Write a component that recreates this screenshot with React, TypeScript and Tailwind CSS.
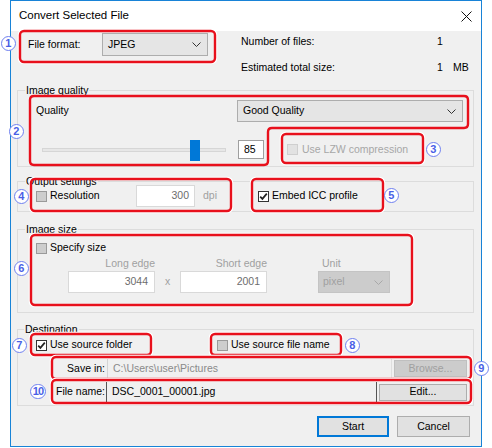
import React from "react";

type BoxKind = "checked" | "gray" | "light";

function CheckBox({ kind }: { kind: BoxKind }) {
  if (kind === "checked") {
    return (
      <span className="w-[11px] h-[11px] border border-[#333333] bg-white flex items-center justify-center shrink-0">
        <svg width="9" height="9" viewBox="0 0 9 9">
          <path d="M1.2 4.6 L3.4 6.9 L7.8 1.6" fill="none" stroke="#222" strokeWidth="1.7" />
        </svg>
      </span>
    );
  }
  if (kind === "gray") {
    return <span className="w-[11px] h-[11px] border border-[#9a9a9a] bg-[#cdcdcd] shrink-0" />;
  }
  return <span className="w-[11px] h-[11px] border border-[#cfcfcf] bg-[#e2e2e2] shrink-0" />;
}

function Chevron({ color = "#333" }: { color?: string }) {
  return (
    <svg width="9" height="5" viewBox="0 0 9 5" className="shrink-0">
      <path d="M0.5 0.5 L4.5 4.5 L8.5 0.5" fill="none" stroke={color} strokeWidth="1" />
    </svg>
  );
}

function Select({ value, className }: { value: string; className: string }) {
  return (
    <div
      className={`flex items-center justify-between border border-[#adadad] bg-[#e5e5e5] pl-[5px] pr-[6px] ${className}`}
    >
      <span>{value}</span>
      <Chevron />
    </div>
  );
}

// rounded outline through a list of corner points
function roundedPath(pts: [number, number][], r: number) {
  const n = pts.length;
  let d = "";
  for (let i = 0; i < n; i++) {
    const [px, py] = pts[(i - 1 + n) % n];
    const [cx, cy] = pts[i];
    const [nx, ny] = pts[(i + 1) % n];
    const l1 = Math.hypot(cx - px, cy - py);
    const l2 = Math.hypot(nx - cx, ny - cy);
    const ax = cx + ((px - cx) / l1) * r;
    const ay = cy + ((py - cy) / l1) * r;
    const bx = cx + ((nx - cx) / l2) * r;
    const by = cy + ((ny - cy) / l2) * r;
    d += `${i === 0 ? "M" : "L"}${ax} ${ay} Q${cx} ${cy} ${bx} ${by} `;
  }
  return d + "Z";
}

const rects: [number, number, number, number][] = [
  [20, 31, 215, 62],
  [282, 134, 423, 163],
  [31, 179, 231, 211],
  [252, 179, 383, 211],
  [31, 235, 412, 305],
  [31, 334, 151, 355],
  [211, 334, 341, 355],
  [52, 357, 471, 379],
  [52, 380, 471, 403],
];

const qualityOutline = roundedPath(
  [
    [30, 96],
    [468, 96],
    [468, 128],
    [268, 128],
    [268, 165],
    [30, 165],
  ],
  4
);

const markers: { n: string; x: number; y: number; w?: number }[] = [
  { n: "1", x: 8, y: 43 },
  { n: "2", x: 16, y: 131 },
  { n: "3", x: 433, y: 149 },
  { n: "4", x: 21, y: 196 },
  { n: "5", x: 391, y: 195 },
  { n: "6", x: 21, y: 268 },
  { n: "7", x: 19, y: 345 },
  { n: "8", x: 352, y: 345 },
  { n: "9", x: 481, y: 368 },
  { n: "10", x: 38, y: 391, w: 16 },
];

export default function App() {
  return (
    <div className="relative w-[492px] h-[448px] bg-white overflow-hidden font-['Liberation_Sans',Arial,sans-serif] text-[10.5px] text-black">
      <div className="ml-[10px] w-[472px] h-[447px] border border-[#1883d7] bg-[#f0f0f0] flex flex-col">
        {/* title bar */}
        <div className="h-[30px] shrink-0 bg-white flex items-center pl-[8px] pr-[9px]">
          <span className="flex-1 text-[11.5px]">Convert Selected File</span>
          <svg width="11" height="11" viewBox="0 0 11 11">
            <path d="M0.5 0.5 L10.5 10.5 M10.5 0.5 L0.5 10.5" stroke="#111" strokeWidth="1" />
          </svg>
        </div>

        <div className="pl-[6px] pr-[7px] flex flex-col">
          {/* file format + summary */}
          <div className="h-[53px] flex items-start">
            <div className="mt-[2px] pl-[11px] h-[23px] flex items-center">
              <span className="w-[74px]">File format:</span>
              <Select value="JPEG" className="w-[106px] h-[23px]" />
            </div>
            <div className="ml-[33px] pt-[3px] flex flex-col gap-[10px]">
              <div className="h-[16px] flex items-center">
                <span className="w-[196px]">Number of files:</span>
                <span className="w-[16px]">1</span>
              </div>
              <div className="h-[16px] flex items-center">
                <span className="w-[196px]">Estimated total size:</span>
                <span className="w-[16px]">1</span>
                <span>MB</span>
              </div>
            </div>
          </div>

          {/* image quality */}
          <fieldset className="border border-[#dcdcdc] pb-[6px]">
            <legend className="ml-[7px] px-[1px] leading-[12px]">Image quality</legend>
            <div className="mt-[4px] h-[22px] pl-[18px] flex items-center">
              <span className="w-[201px]">Quality</span>
              <Select value="Good Quality" className="w-[226px] h-[22px]" />
            </div>
            <div className="mt-[17px] h-[21px] pl-[24px] flex items-center">
              <div className="relative w-[184px] h-[4px] bg-[#e7e7e7] border border-[#d6d6d6]">
                <div className="absolute left-[147px] top-[-9px] w-[10px] h-[21px] bg-[#0078d7]" />
              </div>
              <div className="ml-[12px] w-[26px] h-[19px] bg-white border border-[#9f9f9f] flex items-center pl-[5px]">
                85
              </div>
              <div className="ml-[23px] flex items-center gap-[4px]">
                <CheckBox kind="light" />
                <span className="text-[#a7a7a7]">Use LZW compression</span>
              </div>
            </div>
          </fieldset>

          {/* output settings */}
          <fieldset className="mt-[8px] border border-[#dcdcdc] pb-[4px]">
            <legend className="ml-[7px] px-[1px] leading-[12px]">Output settings</legend>
            <div className="-mt-[2px] h-[22px] pl-[18px] flex items-center">
              <div className="w-[100px] flex items-center gap-[3px]">
                <CheckBox kind="gray" />
                <span>Resolution</span>
              </div>
              <div className="w-[122px] flex items-center">
                <div className="w-[59px] h-[22px] bg-white border border-[#d9d9d9] flex items-center justify-end pr-[5px] text-[#6d6d6d]">
                  300
                </div>
                <span className="ml-[8px] text-[#a0a0a0]">dpi</span>
              </div>
              <div className="flex items-center gap-[3px]">
                <CheckBox kind="checked" />
                <span>Embed ICC profile</span>
              </div>
            </div>
          </fieldset>

          {/* image size */}
          <fieldset className="mt-[11px] border border-[#dcdcdc] pb-[19px]">
            <legend className="ml-[7px] px-[1px] leading-[12px]">Image size</legend>
            <div className="mt-[6px] h-[14px] pl-[18px] flex items-center gap-[3px]">
              <CheckBox kind="gray" />
              <span>Specify size</span>
            </div>
            <div className="mt-[2px] h-[14px] pl-[50px] flex items-center text-[#a0a0a0]">
              <span className="w-[87px] text-right">Long edge</span>
              <span className="w-[25px]" />
              <span className="w-[87px] text-right">Short edge</span>
              <span className="ml-[51px] w-[72px] pl-[4px]">Unit</span>
            </div>
            <div className="h-[22px] pl-[50px] flex items-center">
              <div className="w-[87px] h-[22px] bg-white border border-[#d9d9d9] flex items-center justify-end pr-[6px] text-[#6d6d6d]">
                3044
              </div>
              <span className="w-[25px] text-center text-[#a0a0a0]">x</span>
              <div className="w-[87px] h-[22px] bg-white border border-[#d9d9d9] flex items-center justify-end pr-[6px] text-[#6d6d6d]">
                2001
              </div>
              <div className="ml-[51px] w-[72px] h-[22px] bg-[#cccccc] border border-[#c4c4c4] flex items-center justify-between pl-[4px] pr-[6px] text-[#a0a0a0]">
                <span>pixel</span>
                <Chevron color="#a8a8a8" />
              </div>
            </div>
          </fieldset>

          {/* destination */}
          <fieldset className="mt-[10px] border border-[#dcdcdc] pb-[2px]">
            <legend className="ml-[6px] px-[1px] leading-[12px]">Destination</legend>
            <div className="mt-[3px] h-[14px] pl-[18px] flex items-center">
              <div className="w-[181px] flex items-center gap-[3px]">
                <CheckBox kind="checked" />
                <span>Use source folder</span>
              </div>
              <div className="flex items-center gap-[3px]">
                <CheckBox kind="gray" />
                <span>Use source file name</span>
              </div>
            </div>
            <div className="mt-[6px] h-[21px] pl-[34px] pr-[6px] flex items-center">
              <span className="w-[53px] text-right">Save in:</span>
              <span className="ml-[2px] w-px h-[20px] bg-[#d4d4d4]" />
              <span className="flex-1 pl-[5px] text-[#8a8a8a]">C:\Users\user\Pictures</span>
              <span className="w-px h-[20px] bg-[#dedede]" />
              <div className="ml-[2px] w-[73px] h-[17px] bg-[#cccccc] border border-[#bfbfbf] flex items-center justify-center text-[#a0a0a0]">
                Browse...
              </div>
            </div>
            <div className="mt-[2px] h-[22px] pl-[34px] pr-[6px] flex items-center">
              <span className="w-[53px] text-right">File name:</span>
              <span className="ml-[1px] w-px h-[20px] bg-[#555555]" />
              <span className="flex-1 pl-[5px]">DSC_0001_00001.jpg</span>
              <span className="w-px h-[20px] bg-[#555555]" />
              <div className="ml-[2px] w-[88px] h-[17px] bg-[#e1e1e1] border border-[#adadad] flex items-center justify-center">
                Edit...
              </div>
            </div>
          </fieldset>

          {/* dialog buttons */}
          <div className="mt-[10px] pr-[4px] flex justify-end gap-[8px]">
            <div className="w-[72px] h-[21px] bg-[#e1e1e1] border-2 border-[#0078d7] flex items-center justify-center">
              Start
            </div>
            <div className="w-[73px] h-[21px] bg-[#e1e1e1] border border-[#adadad] flex items-center justify-center">
              Cancel
            </div>
          </div>
        </div>
      </div>

      {/* callout outlines */}
      <svg className="absolute inset-0 pointer-events-none" width="492" height="448" viewBox="0 0 492 448">
        {rects.map(([x1, y1, x2, y2], i) => (
          <g key={i}>
            <rect x={x1 - 1.5} y={y1 - 1.5} width={x2 - x1 + 3} height={y2 - y1 + 3} rx="5" fill="none" stroke="#ffffff" strokeWidth="1.5" />
            <rect x={x1} y={y1} width={x2 - x1} height={y2 - y1} rx="4" fill="none" stroke="#e8101c" strokeWidth="2.4" />
          </g>
        ))}
        <path d={qualityOutline} fill="none" stroke="#e8101c" strokeWidth="2.4" />
      </svg>

      {/* callout numbers */}
      {markers.map((m) => (
        <div
          key={m.n}
          className="absolute h-[15px] rounded-full border-[1.5px] border-[#6f80f0] bg-white flex items-center justify-center text-[11px] font-bold leading-none text-[#4a5fe6] tracking-[-0.8px]"
          style={{ left: m.x - (m.w ?? 15) / 2, top: m.y - 7.5, width: m.w ?? 15 }}
        >
          {m.n}
        </div>
      ))}
    </div>
  );
}
